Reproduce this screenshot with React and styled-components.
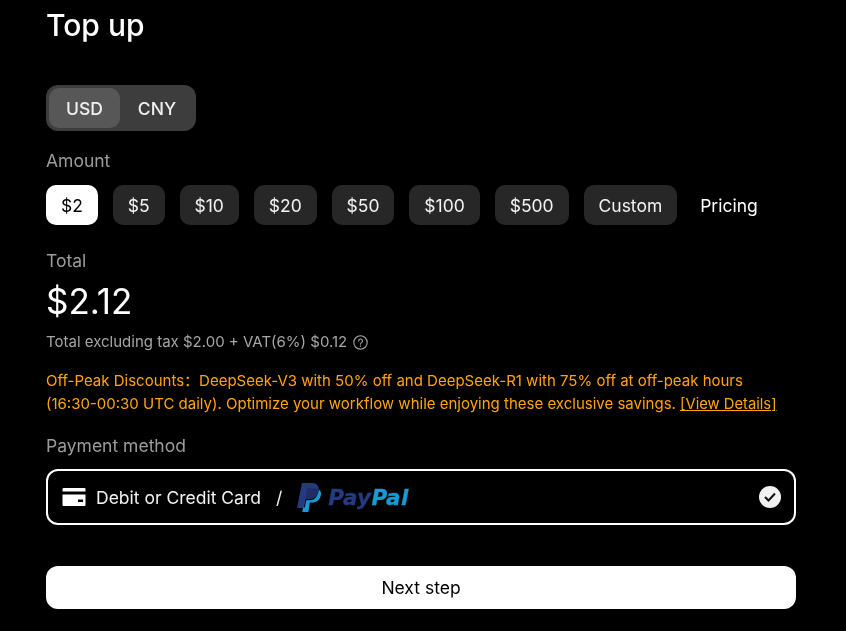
import React from "react";
import styled, { createGlobalStyle } from "styled-components";

const GlobalStyle = createGlobalStyle`
  html, body {
    margin: 0;
    background: #000;
    font-family: "Inter", "Liberation Sans", "Noto Sans CJK SC", sans-serif;
  }
`;

const Page = styled.div`
  width: 750px;
  height: 631px;
  padding: 0 50px 0 46px;
  overflow: hidden;
  color: #fff;
  will-change: transform;
`;

const Title = styled.h1`
  margin: 5px 0 0;
  font-size: 30px;
  line-height: 40px;
  font-weight: 500;
`;

const Toggle = styled.div`
  display: inline-flex;
  gap: 1px;
  margin-top: 40px;
  height: 46px;
  box-sizing: border-box;
  padding: 3px;
  background: #3d3d3d;
  border-radius: 12px;
`;

const ToggleItem = styled.div`
  width: ${(p) => (p.$active ? "71px" : "72px")};
  display: flex;
  align-items: center;
  justify-content: center;
  font-size: 17.5px;
  font-weight: 500;
  color: #f0f0f0;
  border-radius: 10px;
  background: ${(p) => (p.$active ? "#575757" : "transparent")};
`;

const Label = styled.div`
  margin-top: ${(p) => p.$top}px;
  font-size: 17.5px;
  line-height: 24px;
  color: #9c9c9c;
`;

const Amounts = styled.div`
  display: flex;
  gap: 15px;
  margin-top: 12px;
`;

const Amount = styled.div`
  height: 40px;
  padding: 0 14.95px;
  display: flex;
  align-items: center;
  border-radius: 10px;
  font-size: 17.5px;
  color: ${(p) => (p.$active ? "#000" : "#f2f2f2")};
  background: ${(p) => (p.$active ? "#fff" : "#272727")};
`;

const PricingLink = styled.div`
  margin-left: 8px;
  display: flex;
  align-items: center;
  font-size: 17.5px;
  color: #fff;
`;

const TotalValue = styled.div`
  margin-top: 8px;
  font-size: 35px;
  line-height: 40px;
  font-weight: 400;
`;

const TaxRow = styled.div`
  display: flex;
  align-items: center;
  gap: 6px;
  margin-top: 11px;
  font-size: 15px;
  line-height: 20px;
  color: #a6a6a6;
`;

const Notice = styled.p`
  margin: 17px 0 0;
  font-size: 15px;
  line-height: 23px;
  color: #ffa50a;
  white-space: nowrap;
  a {
    color: inherit;
    font-size: 14.75px;
    text-decoration: underline;
  }
`;

const MethodBox = styled.div`
  box-sizing: border-box;
  display: flex;
  align-items: center;
  margin-top: 11px;
  height: 56px;
  padding: 0 14px;
  border: 2px solid #fff;
  border-radius: 12px;
`;

const MethodText = styled.span`
  margin-left: 10px;
  font-size: 17.5px;
  color: #f2f2f2;
`;

const Slash = styled.span`
  margin: 0 15px;
  font-size: 17.5px;
  color: #f2f2f2;
`;

const PayPalWord = styled.span`
  margin-left: 7px;
  font-family: "DejaVu Sans", sans-serif;
  font-size: 21.5px;
  font-weight: 700;
  font-style: italic;
  letter-spacing: 0.3px;
  -webkit-text-stroke: 0.3px currentColor;
  color: #253b80;
  b {
    color: #179bd7;
    font-weight: 700;
  }
`;

const CheckMark = styled.span`
  margin-left: auto;
  margin-right: -1px;
  width: 22px;
  height: 22px;
  border-radius: 50%;
  background: #f2f2f2;
  display: flex;
  align-items: center;
  justify-content: center;
`;

const NextButton = styled.button`
  display: block;
  width: 100%;
  height: 43px;
  margin-top: 41px;
  border: 0;
  border-radius: 12px;
  background: #fff;
  color: #000;
  font-family: inherit;
  font-size: 17.5px;
  font-weight: 400;
`;

const CardIcon = () => (
  <svg width="24" height="20" viewBox="0 0 24 20">
    <path d="M1.5 1h21A1 1 0 0 1 23.500 2v2.500H.5V2a1 1 0 0 1 1-1z" fill="#fff" />
    <path
      fillRule="evenodd"
      d="M.5 7.500h23V18a1 1 0 0 1-1 1h-21a1 1 0 0 1-1-1V7.500zM16 12.500v2.500h5v-2.500h-5z"
      fill="#fff"
    />
  </svg>
);

const HelpIcon = () => (
  <svg width="15" height="15" viewBox="0 0 15 15" fill="none" stroke="#a6a6a6" strokeWidth="1.1">
    <circle cx="7.500" cy="7.500" r="6.700" />
    <path d="M5.600 5.900a1.950 1.950 0 1 1 2.900 1.700c-.65.4-1 .7-1 1.500" strokeLinecap="round" />
    <circle cx="7.500" cy="11" r=".7" fill="#a6a6a6" stroke="none" />
  </svg>
);

const PayPalMark = () => (
  <svg width="24" height="29" viewBox="0 0 24 29">
    <path d="M5 0h9.500c5 0 7.800 2.700 7 7.200C20.600 12.800 17 16 11.500 16H8.500L7 25H0L5 0z" fill="#253b80" />
    <path
      d="M21.800 6.500c2 1.300 2.600 3.500 2 6-1 4.600-4.300 7-8.800 7h-2.300L11.400 29H5.200l.9-4.500h1.800l1.300-7.300h4c4.600 0 7.800-4 8.600-10.700z"
      fill="#179bd7"
    />
    <path d="M8.500 16H12c4.500 0 8-2.300 9.800-9.500-1.800-1-3.800-1.300-6-1.300H10L8.500 16z" fill="#222d65" />
  </svg>
);

const CheckIcon = () => (
  <svg width="12" height="10" viewBox="0 0 12 10" fill="none" stroke="#111" strokeWidth="2">
    <path d="M1 5l3.500 3.500L11 1.500" />
  </svg>
);

const amounts = ["$2", "$5", "$10", "$20", "$50", "$100", "$500", "Custom"];

const App = () => {
  return (
    <Page>
      <GlobalStyle />
      <Title>Top up</Title>
      <Toggle>
        <ToggleItem $active>USD</ToggleItem>
        <ToggleItem>CNY</ToggleItem>
      </Toggle>
      <Label $top={18}>Amount</Label>
      <Amounts>
        {amounts.map((a, i) => (
          <Amount key={a} $active={i === 0}>
            {a}
          </Amount>
        ))}
        <PricingLink>Pricing</PricingLink>
      </Amounts>
      <Label $top={24}>Total</Label>
      <TotalValue>$2.12</TotalValue>
      <TaxRow>
        Total excluding tax $2.00 + VAT(6%) $0.12
        <HelpIcon />
      </TaxRow>
      <Notice>
        Off-Peak Discounts：DeepSeek-V3 with 50% off and DeepSeek-R1 with 75% off at off-peak hours
        <br />
        (16:30-00:30 UTC daily). Optimize your workflow while enjoying these exclusive savings.{" "}
        <a href="#details">[View Details]</a>
      </Notice>
      <Label $top={18}>Payment method</Label>
      <MethodBox>
        <CardIcon />
        <MethodText>Debit or Credit Card</MethodText>
        <Slash>/</Slash>
        <PayPalMark />
        <PayPalWord>
          Pay<b>Pal</b>
        </PayPalWord>
        <CheckMark>
          <CheckIcon />
        </CheckMark>
      </MethodBox>
      <NextButton>Next step</NextButton>
    </Page>
  );
};

export default App;
